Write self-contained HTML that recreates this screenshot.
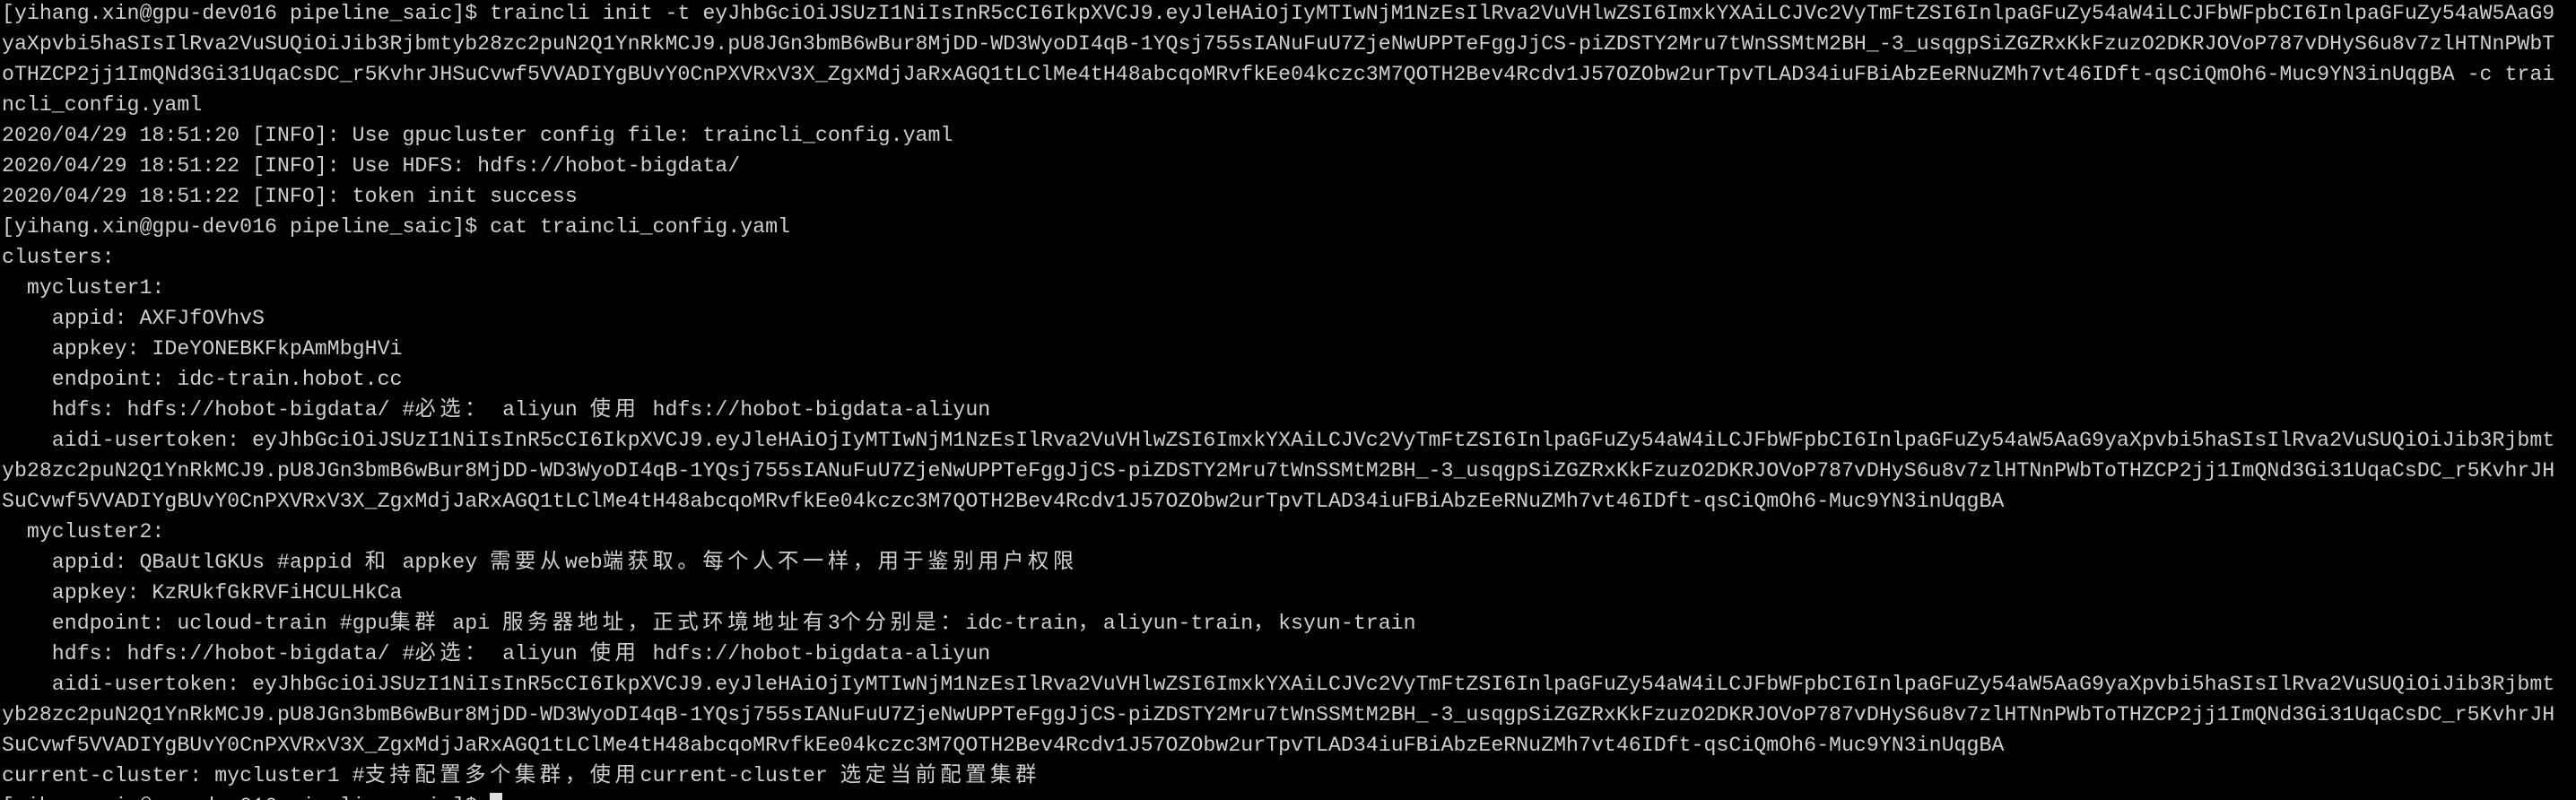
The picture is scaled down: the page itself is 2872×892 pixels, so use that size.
<!DOCTYPE html>
<html><head><meta charset="utf-8"><style>
html,body{margin:0;padding:0;background:#000;overflow:hidden;}
body{width:2872px;height:892px;overflow:hidden;}
.t{font-family:"Liberation Mono","Noto Sans CJK SC",monospace;font-size:23.25px;line-height:34px;color:#cfcfcf;padding:0 0 0 2px;margin-top:-2px;}
.t div{height:34px;white-space:pre;overflow:visible;}
.c{font-family:"Noto Sans CJK SC",sans-serif;letter-spacing:4.65px;line-height:1;vertical-align:baseline;}
.cur{display:inline-block;width:14px;height:26px;background:#e0e0e0;vertical-align:-5px;}
</style></head><body><div class="t"><div>[yihang.xin@gpu-dev016 pipeline_saic]$ traincli init -t eyJhbGciOiJSUzI1NiIsInR5cCI6IkpXVCJ9.eyJleHAiOjIyMTIwNjM1NzEsIlRva2VuVHlwZSI6ImxkYXAiLCJVc2VyTmFtZSI6InlpaGFuZy54aW4iLCJFbWFpbCI6InlpaGFuZy54aW5AaG9</div><div>yaXpvbi5haSIsIlRva2VuSUQiOiJib3Rjbmtyb28zc2puN2Q1YnRkMCJ9.pU8JGn3bmB6wBur8MjDD-WD3WyoDI4qB-1YQsj755sIANuFuU7ZjeNwUPPTeFggJjCS-piZDSTY2Mru7tWnSSMtM2BH_-3_usqgpSiZGZRxKkFzuzO2DKRJOVoP787vDHyS6u8v7zlHTNnPWbT</div><div>oTHZCP2jj1ImQNd3Gi31UqaCsDC_r5KvhrJHSuCvwf5VVADIYgBUvY0CnPXVRxV3X_ZgxMdjJaRxAGQ1tLClMe4tH48abcqoMRvfkEe04kczc3M7QOTH2Bev4Rcdv1J57OZObw2urTpvTLAD34iuFBiAbzEeRNuZMh7vt46IDft-qsCiQmOh6-Muc9YN3inUqgBA -c trai</div><div>ncli_config.yaml</div><div>2020/04/29 18:51:20 [INFO]: Use gpucluster config file: traincli_config.yaml</div><div>2020/04/29 18:51:22 [INFO]: Use HDFS: hdfs://hobot-bigdata/</div><div>2020/04/29 18:51:22 [INFO]: token init success</div><div>[yihang.xin@gpu-dev016 pipeline_saic]$ cat traincli_config.yaml</div><div>clusters:</div><div>  mycluster1:</div><div>    appid: AXFJfOVhvS</div><div>    appkey: IDeYONEBKFkpAmMbgHVi</div><div>    endpoint: idc-train.hobot.cc</div><div>    hdfs: hdfs://hobot-bigdata/ #<span class="c">必选：</span> aliyun <span class="c">使用</span> hdfs://hobot-bigdata-aliyun</div><div>    aidi-usertoken: eyJhbGciOiJSUzI1NiIsInR5cCI6IkpXVCJ9.eyJleHAiOjIyMTIwNjM1NzEsIlRva2VuVHlwZSI6ImxkYXAiLCJVc2VyTmFtZSI6InlpaGFuZy54aW4iLCJFbWFpbCI6InlpaGFuZy54aW5AaG9yaXpvbi5haSIsIlRva2VuSUQiOiJib3Rjbmt</div><div>yb28zc2puN2Q1YnRkMCJ9.pU8JGn3bmB6wBur8MjDD-WD3WyoDI4qB-1YQsj755sIANuFuU7ZjeNwUPPTeFggJjCS-piZDSTY2Mru7tWnSSMtM2BH_-3_usqgpSiZGZRxKkFzuzO2DKRJOVoP787vDHyS6u8v7zlHTNnPWbToTHZCP2jj1ImQNd3Gi31UqaCsDC_r5KvhrJH</div><div>SuCvwf5VVADIYgBUvY0CnPXVRxV3X_ZgxMdjJaRxAGQ1tLClMe4tH48abcqoMRvfkEe04kczc3M7QOTH2Bev4Rcdv1J57OZObw2urTpvTLAD34iuFBiAbzEeRNuZMh7vt46IDft-qsCiQmOh6-Muc9YN3inUqgBA</div><div>  mycluster2:</div><div>    appid: QBaUtlGKUs #appid <span class="c">和</span> appkey <span class="c">需要从</span>web<span class="c">端获取。每个人不一样，用于鉴别用户权限</span></div><div>    appkey: KzRUkfGkRVFiHCULHkCa</div><div>    endpoint: ucloud-train #gpu<span class="c">集群</span> api <span class="c">服务器地址，正式环境地址有</span>3<span class="c">个分别是：</span>idc-train<span class="c">，</span>aliyun-train<span class="c">，</span>ksyun-train</div><div>    hdfs: hdfs://hobot-bigdata/ #<span class="c">必选：</span> aliyun <span class="c">使用</span> hdfs://hobot-bigdata-aliyun</div><div>    aidi-usertoken: eyJhbGciOiJSUzI1NiIsInR5cCI6IkpXVCJ9.eyJleHAiOjIyMTIwNjM1NzEsIlRva2VuVHlwZSI6ImxkYXAiLCJVc2VyTmFtZSI6InlpaGFuZy54aW4iLCJFbWFpbCI6InlpaGFuZy54aW5AaG9yaXpvbi5haSIsIlRva2VuSUQiOiJib3Rjbmt</div><div>yb28zc2puN2Q1YnRkMCJ9.pU8JGn3bmB6wBur8MjDD-WD3WyoDI4qB-1YQsj755sIANuFuU7ZjeNwUPPTeFggJjCS-piZDSTY2Mru7tWnSSMtM2BH_-3_usqgpSiZGZRxKkFzuzO2DKRJOVoP787vDHyS6u8v7zlHTNnPWbToTHZCP2jj1ImQNd3Gi31UqaCsDC_r5KvhrJH</div><div>SuCvwf5VVADIYgBUvY0CnPXVRxV3X_ZgxMdjJaRxAGQ1tLClMe4tH48abcqoMRvfkEe04kczc3M7QOTH2Bev4Rcdv1J57OZObw2urTpvTLAD34iuFBiAbzEeRNuZMh7vt46IDft-qsCiQmOh6-Muc9YN3inUqgBA</div><div>current-cluster: mycluster1 #<span class="c">支持配置多个集群，使用</span>current-cluster <span class="c">选定当前配置集群</span></div><div>[yihang.xin@gpu-dev016 pipeline_saic]$ <span class="cur"></span></div></div></body></html>
